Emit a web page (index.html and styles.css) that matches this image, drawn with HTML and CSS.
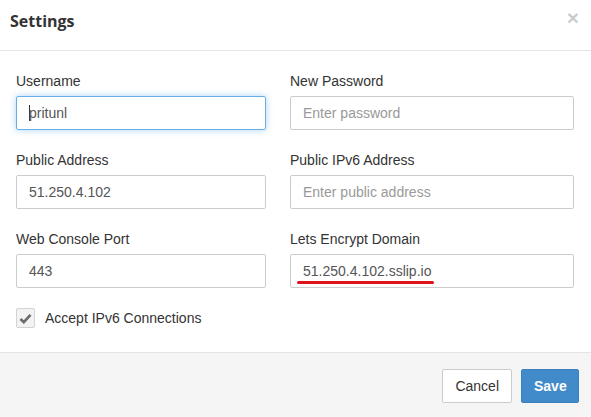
FILE: index.html
```html
<!DOCTYPE html>
<html>
<head>
<meta charset="utf-8">
<link rel="stylesheet" href="styles.css">
</head>
<body>
<div class="modal">
  <div class="modal-header">
    <h4 class="title">Settings</h4>
    <span class="close">×</span>
  </div>
  <div class="modal-body">
    <div class="grid">
      <div class="field">
        <label class="label">Username</label>
        <div class="input focused"><span class="caret"></span>pritunl</div>
      </div>
      <div class="field">
        <label class="label">New Password</label>
        <div class="input placeholder">Enter password</div>
      </div>
      <div class="field">
        <label class="label">Public Address</label>
        <div class="input">51.250.4.102</div>
      </div>
      <div class="field">
        <label class="label">Public IPv6 Address</label>
        <div class="input placeholder">Enter public address</div>
      </div>
      <div class="field">
        <label class="label">Web Console Port</label>
        <div class="input">443</div>
      </div>
      <div class="field">
        <label class="label">Lets Encrypt Domain</label>
        <div class="input annotated">51.250.4.102.sslip.io<span class="redline"></span></div>
      </div>
    </div>
    <div class="check-row">
      <span class="checkbox">
        <svg width="13" height="11" viewBox="0 0 13 11"><path d="M1.5 6 L4.8 9.2 L11.5 1.8" fill="none" stroke="#6b6b6b" stroke-width="2.6" stroke-linejoin="miter"/></svg>
      </span>
      <span class="check-label">Accept IPv6 Connections</span>
    </div>
  </div>
  <div class="modal-footer">
    <button class="btn btn-default">Cancel</button>
    <button class="btn btn-primary">Save</button>
  </div>
</div>
</body>
</html>
```

FILE: styles.css
```css
html, body {
  margin: 0;
  padding: 0;
  background: #fff;
}
body {
  width: 591px;
  height: 417px;
  overflow: hidden;
  font-family: "Liberation Sans", Arial, sans-serif;
  font-size: 14px;
  color: #333;
}
.modal {
  display: flex;
  flex-direction: column;
  height: 417px;
}
.modal-header {
  height: 50px;
  border-bottom: 1px solid #e5e5e5;
  display: flex;
  align-items: center;
  justify-content: space-between;
  padding: 0 12px 0 10px;
  box-sizing: content-box;
}
.title {
  margin: 0;
  font-family: "Open Sans", sans-serif;
  font-weight: 700;
  font-size: 16px;
  color: #333;
  position: relative;
  top: -4px;
}
.close {
  font-family: "Liberation Sans", Arial, sans-serif;
  font-size: 21px;
  font-weight: 700;
  color: #000;
  opacity: 0.2;
  line-height: 1;
  position: relative;
  top: -8px;
}
.modal-body {
  padding: 19px 0 24px 16px;
}
.grid {
  display: grid;
  grid-template-columns: 250px 284px;
  column-gap: 24px;
  row-gap: 19px;
}
.field {
  display: flex;
  flex-direction: column;
}
.label {
  line-height: 20px;
  height: 20px;
  padding-top: 1px;
  margin-bottom: 5px;
  color: #333;
}
.input {
  height: 34px;
  box-sizing: border-box;
  border: 1px solid #ccc;
  border-radius: 2px;
  padding: 0 12px;
  line-height: 32px;
  color: #555;
  position: relative;
  white-space: nowrap;
}
.input.focused {
  border-color: #66afe9;
  box-shadow: 0 0 7px rgba(102, 175, 233, 0.55);
}
.caret {
  display: inline-block;
  width: 1px;
  height: 16px;
  background: #333;
  vertical-align: -3px;
  margin-right: -1px;
}
.placeholder {
  color: #999;
}
.redline {
  position: absolute;
  left: 6px;
  width: 137px;
  top: 26px;
  height: 3px;
  border-radius: 2px;
  background: #e0121a;
}
.check-row {
  margin-top: 20px;
  display: flex;
  align-items: center;
  height: 20px;
}
.checkbox {
  width: 17px;
  height: 18px;
  border: 1px solid #d3d3d3;
  border-radius: 2px;
  background: #f3f3f3;
  display: flex;
  align-items: center;
  justify-content: center;
  margin-right: 10px;
}
.check-label {
  color: #333;
}
.modal-footer {
  flex: 1;
  border-top: 1px solid #e5e5e5;
  background: #f5f5f5;
  display: flex;
  justify-content: flex-end;
  align-items: flex-start;
  padding: 16px 12px 0 0;
  gap: 9px;
}
.btn {
  height: 34px;
  padding: 0 12px;
  font-family: "Liberation Sans", Arial, sans-serif;
  font-size: 14px;
  border-radius: 2px;
  border: 1px solid #ccc;
  line-height: 32px;
  box-sizing: border-box;
}
.btn-default {
  background: #fff;
  color: #333;
}
.btn-primary {
  background: #428bca;
  border-color: #3a80bd;
  color: #fff;
  font-weight: 700;
  width: 58px;
}
```
